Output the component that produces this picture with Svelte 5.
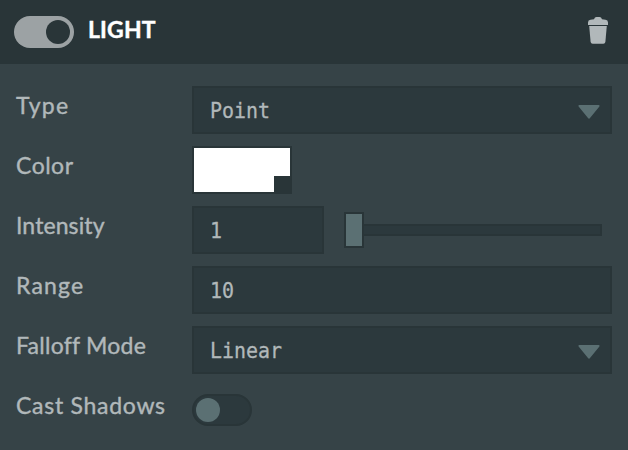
<script>
  let enabled = $state(true);
  let castShadows = $state(false);
</script>

{#snippet arrow()}
  <svg class="arrow" width="22" height="14" viewBox="0 0 22 14"><path d="M1.4 0H20.6Q22 .2 21.4 1.5L12 13.1Q11 14.4 10 13.1L.6 1.5Q0 .2 1.4 0Z" fill="#5b7073" /></svg>
{/snippet}

<div class="panel">
  <header>
    <button class="toggle" class:on={enabled} aria-label="Enabled" onclick={() => (enabled = !enabled)}><i></i></button>
    <h1>LIGHT</h1>
    <svg class="trash" width="20" height="27" viewBox="0 0 20 27" fill="#b1b8ba">
      <path d="M0 8V5.5Q0 3 2.5 2.8L6 2.3Q6.7 0 8.5 0H11.5Q13.3 0 14 2.3L17.5 2.8Q20 3 20 5.5V8Z" />
      <path d="M1.2 9.1H18.8L17.4 24.8Q17.2 26.7 15.3 26.7H4.7Q2.8 26.7 2.6 24.8Z" />
    </svg>
  </header>
  <div class="rows">
    <div class="row"><span class="label type">Type</span>
      <div class="field"><span>Point</span>{@render arrow()}</div></div>
    <div class="row"><span class="label color">Color</span>
      <div class="swatch"><i></i></div></div>
    <div class="row"><span class="label intensity">Intensity</span>
      <div class="field short"><span>1</span></div>
      <div class="slider"><i class="handle"></i><i class="track"></i></div></div>
    <div class="row"><span class="label range">Range</span>
      <div class="field"><span>10</span></div></div>
    <div class="row"><span class="label falloff">Falloff Mode</span>
      <div class="field"><span>Linear</span>{@render arrow()}</div></div>
    <div class="row"><span class="label cast">Cast Shadows</span>
      <button class="toggle" class:off={!castShadows} class:on={castShadows} aria-label="Cast Shadows" onclick={() => (castShadows = !castShadows)}><i></i></button></div>
  </div>
</div>

<style>
  .panel { width: 628px; height: 450px; overflow: hidden; background: #364347; color: #b1b8ba; font-family: Lato, sans-serif; }
  .panel, .panel * { box-sizing: border-box; }
  header { height: 64px; display: flex; align-items: center; padding: 0 20px 0 14px; background: #293538; }
  h1 { margin: 0 auto 6px 14px; font-size: 23px; line-height: 30px; font-weight: 700; letter-spacing: 0.15px; color: #fff; -webkit-text-stroke: 0.4px #fff; }
  .trash { margin-bottom: 3px; }
  .rows { padding: 22px 16px 0; display: flex; flex-direction: column; gap: 12px; }
  .row { height: 48px; display: flex; align-items: center; }
  .label { width: 176px; flex: none; padding-bottom: 10px; font-size: 23px; line-height: 30px; white-space: nowrap; -webkit-text-stroke: 0.4px #b1b8ba; }
  .type { letter-spacing: 1.2px; }
  .color { letter-spacing: 0.5px; }
  .intensity { letter-spacing: 0.1px; }
  .range { letter-spacing: 1.2px; }
  .falloff { letter-spacing: 0.25px; }
  .cast { letter-spacing: 0.72px; }
  .field { flex: 1; height: 48px; display: flex; align-items: center; justify-content: space-between; padding: 0 11px 0 16px; border: 2px solid #293538; background: #2c393d; }
  .field span { padding-top: 2px; font: 22px/30px "DejaVu Sans Mono", monospace; transform: scaleX(0.906); transform-origin: left; -webkit-text-stroke: 0.3px #b1b8ba; }
  .short { flex: none; width: 132px; }
  .arrow { margin-top: 4px; }
  .field { padding-right: 10px; }
  .swatch { width: 100px; height: 48px; display: flex; align-items: flex-end; justify-content: flex-end; border: 2px solid #293538; background: #fff; }
  .swatch i { width: 16px; height: 16px; background: #293538; }
  .slider { flex: 1; display: flex; align-items: center; margin: 0 10px 0 20px; }
  .handle { width: 20px; height: 36px; border: 2px solid #293538; background: #5b7073; }
  .track { flex: 1; height: 12px; border: 2px solid #293538; border-left: 0; background: #2c393d; }
  .toggle { width: 60px; height: 32px; display: flex; align-items: center; margin: 0; padding: 0 4px; border: 0; border-radius: 16px; }
  .toggle i { width: 24px; height: 24px; border-radius: 50%; }
  .on { justify-content: flex-end; background: #9ca2a4; }
  .on i { background: #293538; }
  .off { padding: 0 2px; border: 2px solid #293538; background: #2c393d; }
  .off i { background: #5b7073; }
</style>
